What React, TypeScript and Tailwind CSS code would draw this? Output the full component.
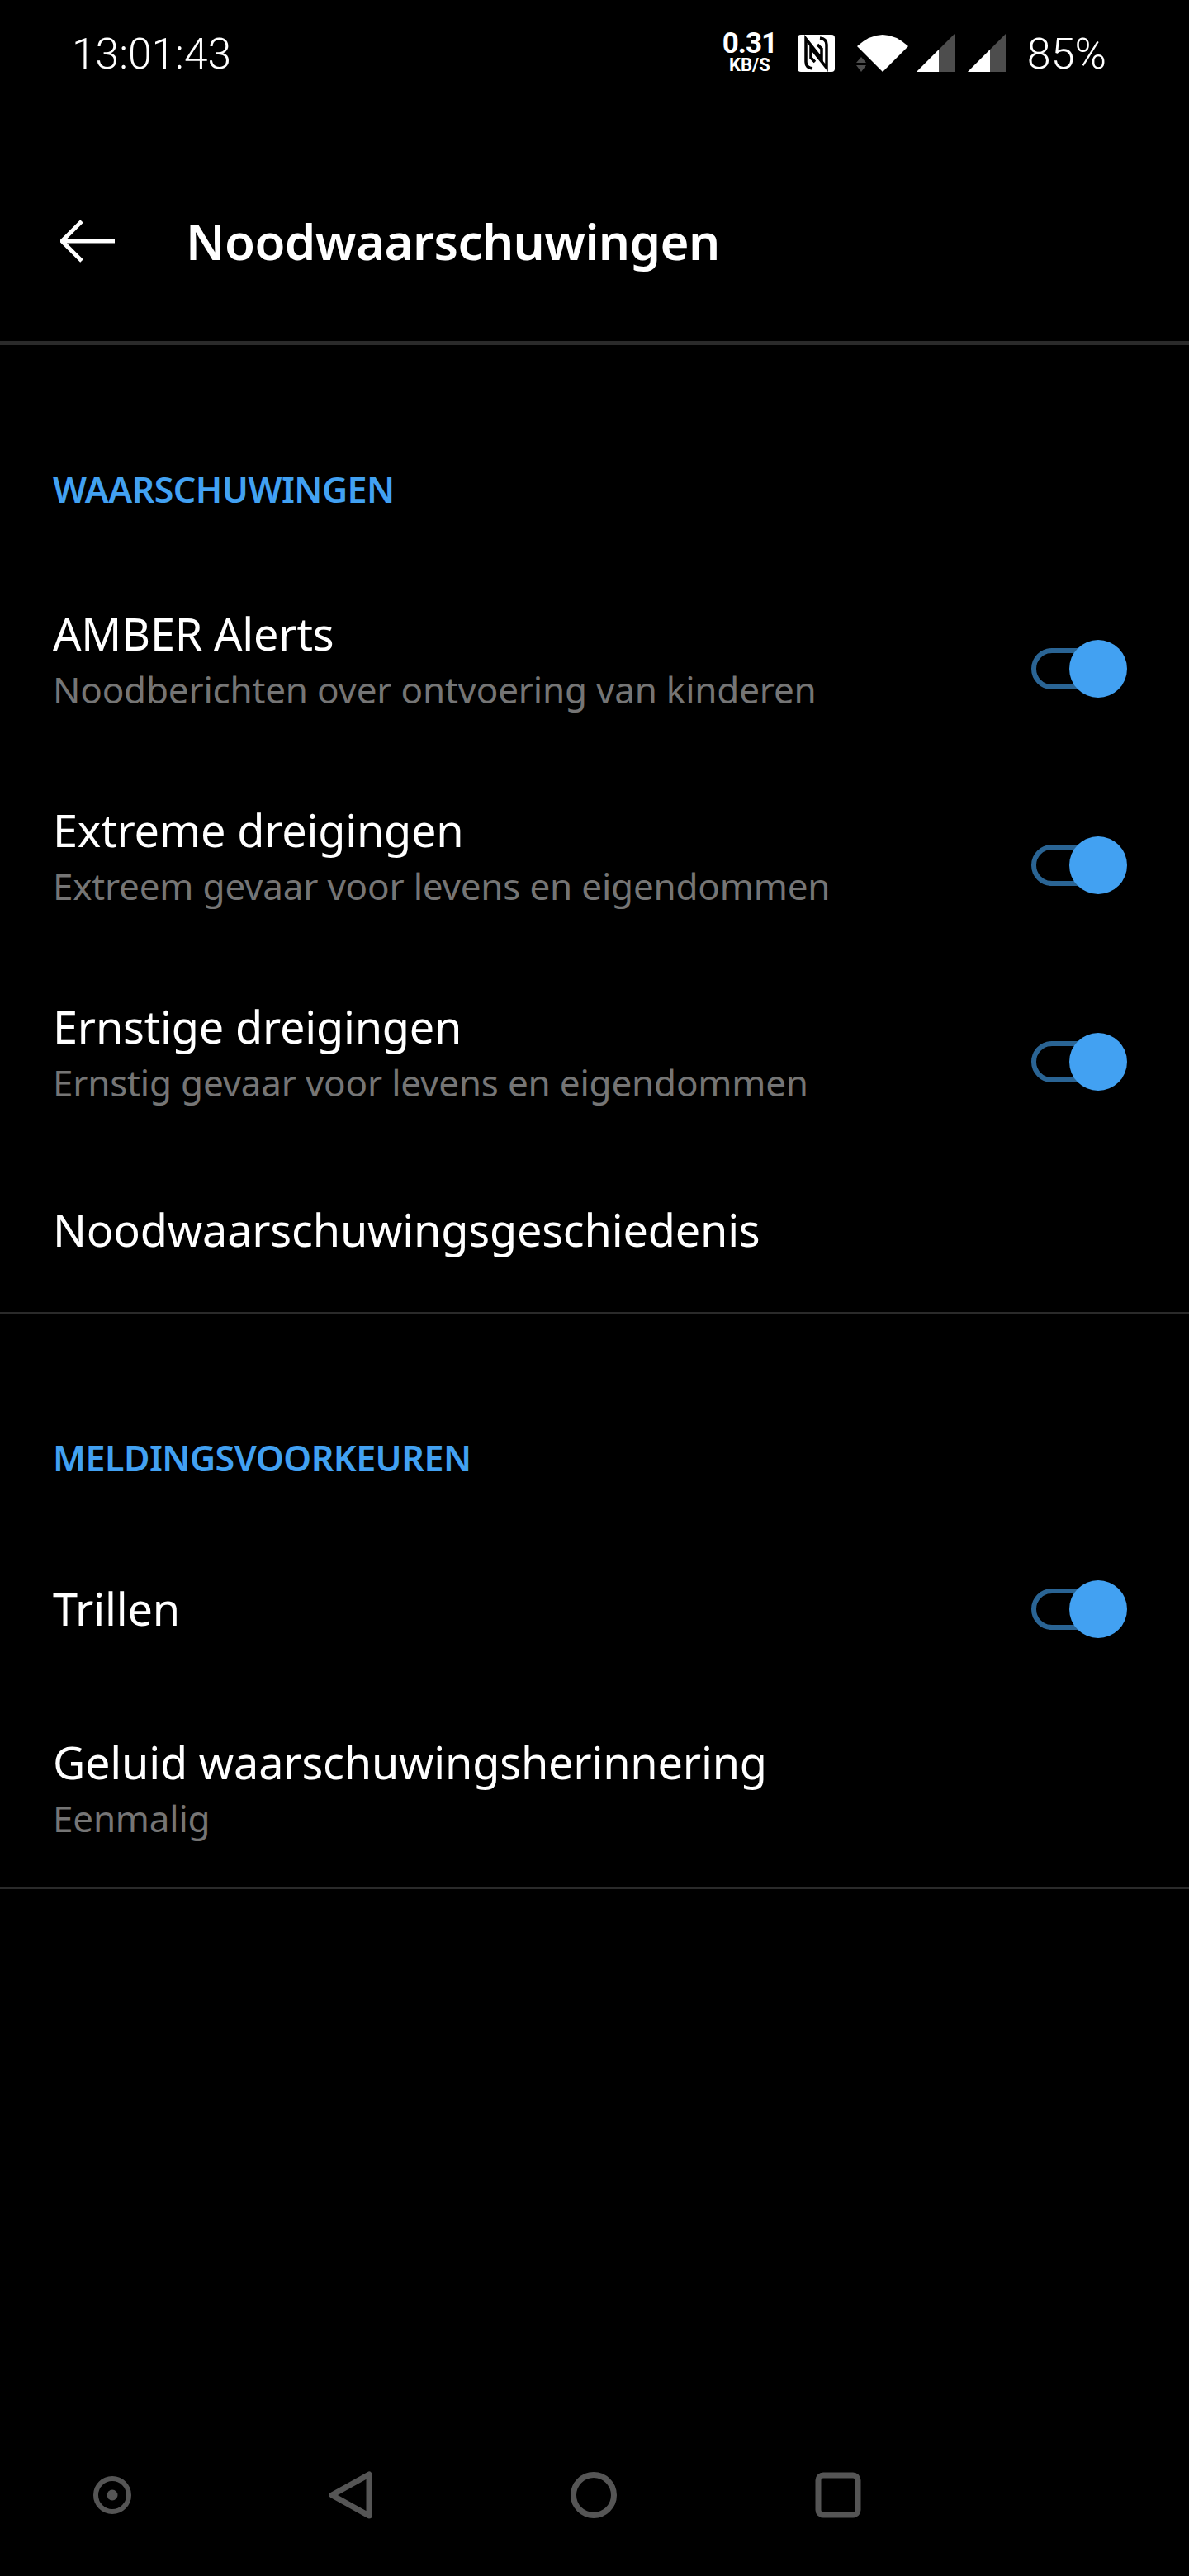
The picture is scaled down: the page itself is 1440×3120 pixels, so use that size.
const body = "font-['Noto_Sans',sans-serif]";

function Toggle({ low }: { low?: boolean }) {
  return (
    <div className={`relative w-[116px] h-[70px] shrink-0 flex items-center ${low ? 'mt-[16px]' : ''}`}>
      <div className="w-[92px] h-[50px] rounded-full border-[6px] border-[#2a6494]" />
      <div className="absolute right-0 top-0 w-[70px] h-[70px] rounded-full bg-[#42a1f2]" />
    </div>
  );
}

function Row({
  title,
  sub,
  toggle,
  className,
}: {
  title: string;
  sub?: string;
  toggle?: boolean;
  className: string;
}) {
  return (
    <div className={`flex items-center justify-between pl-[64px] pr-[75px] ${className}`}>
      <div>
        <div className="text-[54px] leading-[68px] text-white tracking-[-0.2px] -mt-[2px]">{title}</div>
        {sub && <div className="text-[44px] leading-[68px] text-[#757575] tracking-[-0.2px]">{sub}</div>}
      </div>
      {toggle && <Toggle low={!!sub} />}
    </div>
  );
}

function SectionTitle({ children }: { children: string }) {
  return (
    <h2 className="pl-[64px] pt-[147px] text-[43px] leading-[56px] font-semibold text-[#42a1f2] tracking-[-0.5px]">
      {children}
    </h2>
  );
}

function StatusIcons() {
  return (
    <div className="flex items-center">
      <div className="w-[60px] flex flex-col items-center font-['Roboto',sans-serif] font-bold text-white">
        <span className="text-[35px] leading-[30px] tracking-[-1px]">0.31</span>
        <span className="text-[22px] leading-[22px]">KB/S</span>
      </div>
      <svg className="ml-[28px]" width="45" height="45" viewBox="0 0 45 45" fill="none">
        <rect width="45" height="45" rx="4" fill="#fff" />
        <path d="M18 41Q10 40 10 33V5L29 29V17L24 12" stroke="#000" strokeWidth="3.5" />
        <path d="M27 4Q35 5 35 12V40L16 16V28L21 33" stroke="#000" strokeWidth="3.5" />
      </svg>
      <svg className="ml-[26px]" width="64" height="46" viewBox="0 0 64 46">
        <path d="M1 15Q32 -13 63 15L32 46Z" fill="#fff" />
        <path d="M6 28L0 35H12ZM6 46L0 38H12Z" fill="#4d4d4d" />
      </svg>
      <svg className="ml-[9px]" width="46" height="46" viewBox="0 0 46 46">
        <path d="M46 0V46H0Z" fill="#4d4d4d" />
        <path d="M27 19V46H0Z" fill="#fff" />
      </svg>
      <svg className="ml-[16px]" width="46" height="46" viewBox="0 0 46 46">
        <path d="M46 0V46H0Z" fill="#4d4d4d" />
        <path d="M27 19V46H0Z" fill="#fff" />
      </svg>
      <span className="ml-[26px] mt-[3px] font-['Roboto',sans-serif] font-light text-[52px] leading-none text-white">85%</span>
    </div>
  );
}

function NavBar() {
  return (
    <div className="flex items-center h-[52px] mt-[708px] pl-[113px]">
      <svg width="46" height="46" viewBox="0 0 46 46" fill="none">
        <circle cx="23" cy="23" r="20" stroke="#555" strokeWidth="6" />
        <circle cx="23" cy="23" r="6.5" fill="#555" />
      </svg>
      <svg className="ml-[239px]" width="54" height="58" viewBox="0 0 54 58" fill="none">
        <path d="M49 4V54L4 29Z" stroke="#555" strokeWidth="7" strokeLinejoin="round" />
      </svg>
      <svg className="ml-[239px]" width="56" height="58" viewBox="0 0 56 58" fill="none">
        <circle cx="28" cy="29" r="24.5" stroke="#555" strokeWidth="7" />
      </svg>
      <svg className="ml-[240px]" width="56" height="58" viewBox="0 0 56 58" fill="none">
        <rect x="4" y="5" width="48" height="48" rx="6" stroke="#555" strokeWidth="7" />
      </svg>
    </div>
  );
}

export default function App() {
  return (
    <div className={`w-[1440px] h-[3120px] bg-black overflow-hidden ${body}`}>
      {/* status bar */}
      <div className="flex items-center justify-between h-[128px] pl-[87px] pr-[100px] text-white">
        <span className="mt-[3px] font-['Roboto',sans-serif] text-[51.5px] font-light leading-none">13:01:43</span>
        <StatusIcons />
      </div>

      {/* toolbar */}
      <div className="flex items-center h-[160px] border-b-[5px] border-[#2a2a2a] box-content pl-[73px] pt-[84px] pb-[41px]">
        <svg width="66" height="52" viewBox="0 0 66 52" fill="none" stroke="#fff" strokeWidth="5">
          <path d="M66 26H3M26 2L2 26L26 50" />
        </svg>
        <h1 className="ml-[86px] text-[60px] font-semibold text-white tracking-[-0.6px]">Noodwaarschuwingen</h1>
      </div>

      {/* waarschuwingen */}
      <div className="border-b-2 border-[#2a2a2a] pb-[6px]">
        <SectionTitle>WAARSCHUWINGEN</SectionTitle>
        <Row className="h-[238px] mt-[62px]" title="AMBER Alerts" sub="Noodberichten over ontvoering van kinderen" toggle />
        <Row className="h-[238px]" title="Extreme dreigingen" sub="Extreem gevaar voor levens en eigendommen" toggle />
        <Row className="h-[238px]" title="Ernstige dreigingen" sub="Ernstig gevaar voor levens en eigendommen" toggle />
        <Row className="h-[186px]" title="Noodwaarschuwingsgeschiedenis" />
      </div>

      {/* meldingsvoorkeuren */}
      <div className="border-b-2 border-[#2a2a2a]">
        <SectionTitle>MELDINGSVOORKEUREN</SectionTitle>
        <Row className="h-[190px] mt-[60px]" title="Trillen" toggle />
        <Row className="h-[242px] pt-[8px]" title="Geluid waarschuwingsherinnering" sub="Eenmalig" />
      </div>

      <NavBar />
    </div>
  );
}
